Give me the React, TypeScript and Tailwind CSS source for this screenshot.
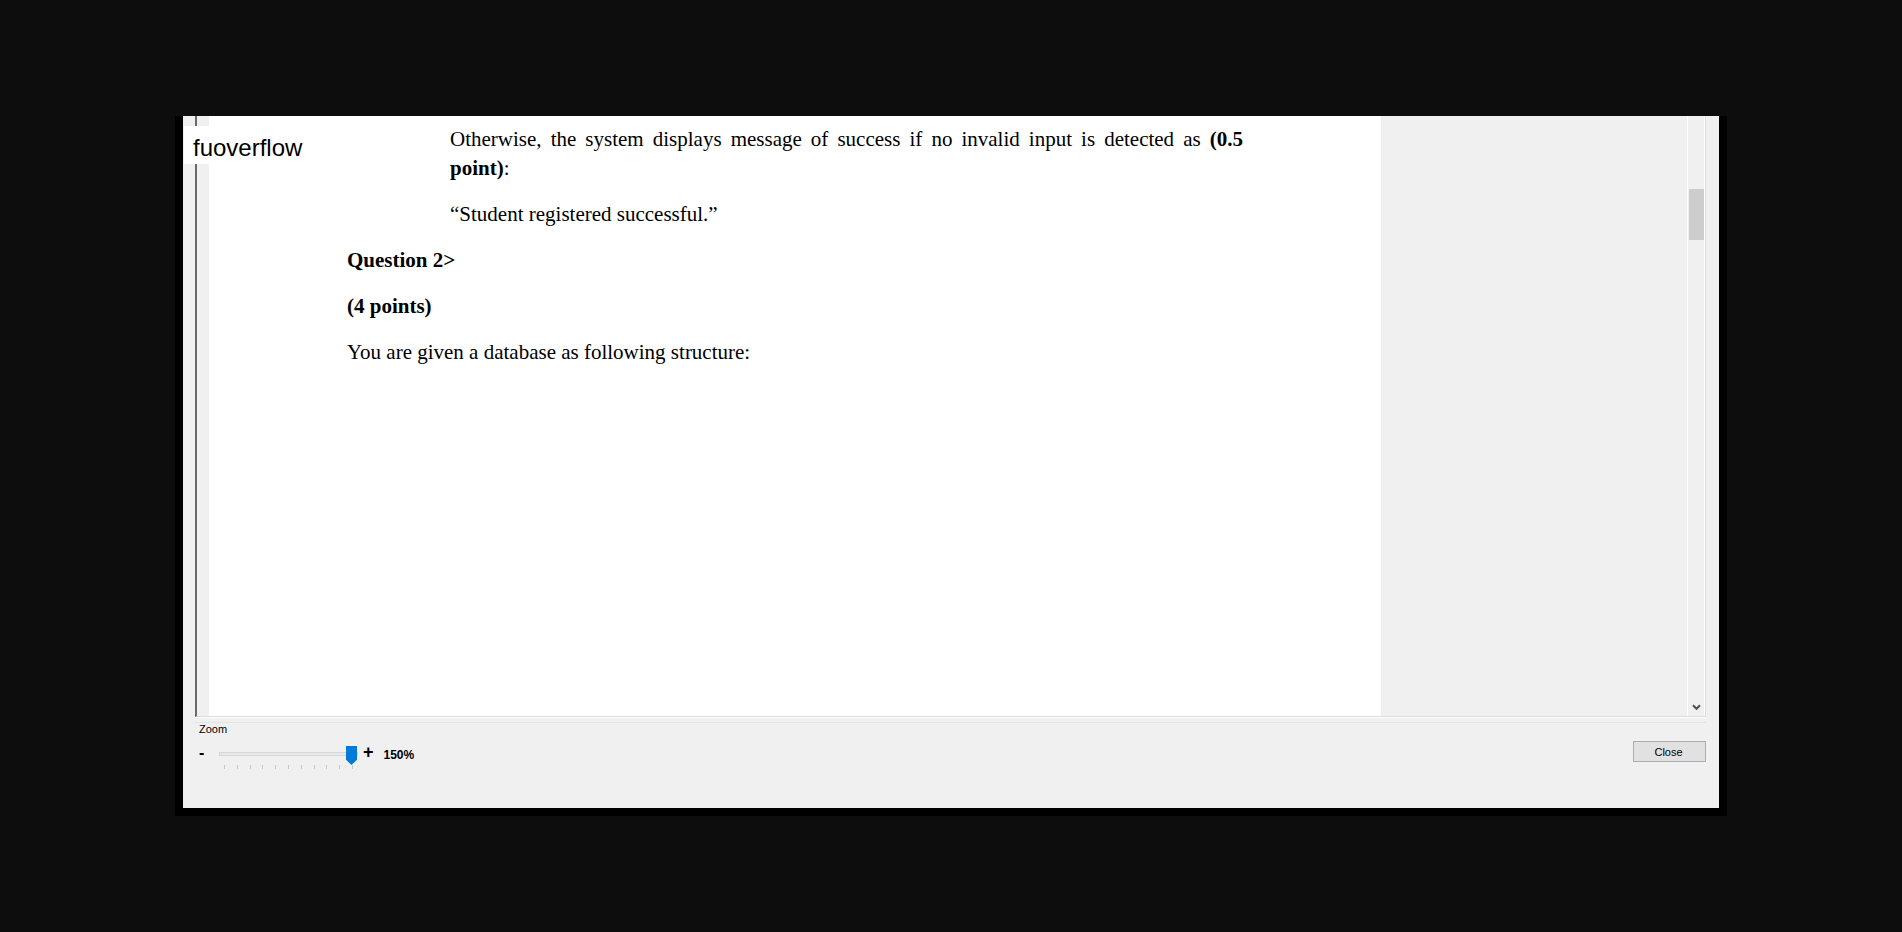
import React, { useState } from "react";

const TICKS = Array.from({ length: 11 }, (_, i) => i);

function DocumentPage() {
  return (
    <article className="w-[1172px] min-w-0 shrink bg-white pt-[9px] pr-[138px] pl-[138px] font-['Liberation_Serif',serif] text-[21px] leading-[29px] text-black">
      <div className="mb-[17px] flex flex-col gap-[17px] pl-[103px]">
        <p className="text-justify">
          Otherwise, the system displays message of success if no invalid input is detected as{" "}
          <b>(0.5</b> <b>point)</b>:
        </p>
        <p>“Student registered successful.”</p>
      </div>
      <div className="flex flex-col gap-[17px]">
        <h2 className="font-bold">Question 2&gt;</h2>
        <p className="font-bold">(4 points)</p>
        <p>You are given a database as following structure:</p>
      </div>
    </article>
  );
}

function ScrollBar() {
  return (
    <div className="flex w-[18px] shrink-0 flex-col items-center border-x border-white bg-[#f0f0f0] pt-[73px]">
      <div className="h-[51px] w-[15px] bg-[#cdcdcd]" />
      <button type="button" aria-label="Scroll down" className="mt-auto flex h-[17px] w-full items-center justify-center">
        <svg width="9" height="7" viewBox="0 0 9 7" fill="none" stroke="#505050" strokeWidth="2">
          <path d="M1 1.2 4.5 4.8 8 1.2" />
        </svg>
      </button>
    </div>
  );
}

function ZoomControl() {
  const [zoom, setZoom] = useState(150);
  return (
    <div className="flex flex-col pl-1">
      <label htmlFor="zoom" className="text-[11px] leading-3">
        Zoom
      </label>
      <div className="mt-[9px] flex items-start font-bold">
        <span className="w-5 text-[16px] leading-[18px]">-</span>
        <div className="flex w-[139px] flex-col">
          <input
            id="zoom"
            type="range"
            min={50}
            max={150}
            step={10}
            value={zoom}
            onChange={(e) => setZoom(Number(e.target.value))}
            className="h-5 w-full appearance-none bg-transparent [&::-webkit-slider-runnable-track]:h-1 [&::-webkit-slider-runnable-track]:border [&::-webkit-slider-runnable-track]:border-[#d6d6d6] [&::-webkit-slider-runnable-track]:bg-[#e7eaea] [&::-webkit-slider-thumb]:-mt-[7px] [&::-webkit-slider-thumb]:h-[19px] [&::-webkit-slider-thumb]:w-[11px] [&::-webkit-slider-thumb]:appearance-none [&::-webkit-slider-thumb]:bg-[#007ad9] [&::-webkit-slider-thumb]:[clip-path:polygon(0_0,100%_0,100%_72%,50%_100%,0_72%)]"
          />
          <div className="flex justify-between px-[5px] pt-px">
            {TICKS.map((tick) => (
              <span key={tick} className="h-1 w-px bg-[#c8c8c8]" />
            ))}
          </div>
        </div>
        <span className="ml-[5px] text-[18px] leading-4">+</span>
        <output htmlFor="zoom" className="ml-[10px] text-[12px] leading-[22px]">
          {zoom}%
        </output>
      </div>
    </div>
  );
}

export default function App() {
  return (
    <main className="flex min-h-screen items-center justify-center bg-[#0d0d0d] px-[175px]">
      <section className="relative w-full border-x-8 border-b-8 border-black bg-[#f0f0f0] font-['Liberation_Sans',sans-serif] text-black">
        <div className="mr-[13px] ml-3 flex h-[601px] border-b border-l-2 border-b-[#dcdcdc] border-l-[#696969] pl-3">
          <DocumentPage />
          <div className="flex-1" />
          <ScrollBar />
          <div className="w-px bg-[#dcdcdc]" />
        </div>
        <div className="mr-[13px] ml-3 h-[6px] border-t border-b border-t-white border-b-[#e4e4e4]" />
        <footer className="flex min-h-[85px] items-start justify-between pr-[13px] pl-3">
          <ZoomControl />
          <button type="button" className="mt-[18px] h-[21px] w-[73px] border border-[#adadad] bg-[#e1e1e1] pt-px pr-[2px] text-[11px]">
            Close
          </button>
        </footer>
        <div className="absolute top-[10px] left-px bg-white px-[9px] pt-[6px] text-[24px] leading-8">fuoverflow</div>
      </section>
    </main>
  );
}
